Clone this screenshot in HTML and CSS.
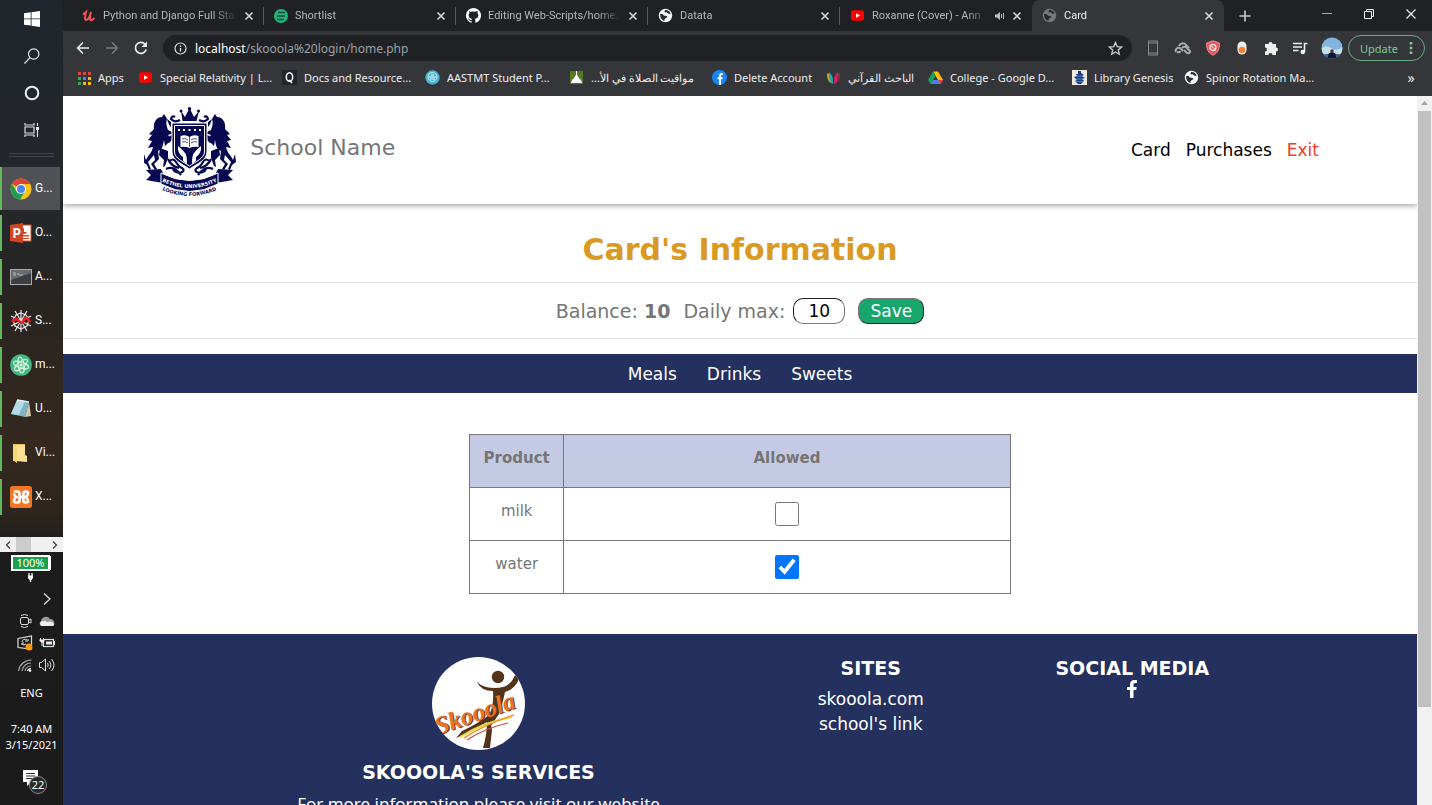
FILE: index.html
```html
<!DOCTYPE html>
<html lang="en">
<head>
<meta charset="utf-8">
<title>Card</title>
<link rel="stylesheet" href="styles.css">
</head>
<body>
<svg class="defs" aria-hidden="true">
  <symbol id="globe" viewBox="0 0 16 16"><circle cx="8" cy="8" r="7.200" fill="currentColor"/><path d="M2.200 6.500c2-.5 3 .2 3.800 1.200s3 .2 3.800 1.300c.6 1.200-1.800 1.600-2.600 2.600-.6.800.2 1.400-.6 2.200C4 13 2 10.500 2.200 6.500zM7.500 2.200c2.500-.5 5 1.300 6 3.600-1.500.8-2.500.2-3.200-.6-1-.8-2.600 0-3.300-1 0-.8.600-1 .5-2z" fill="#292a2d"/></symbol>
  <symbol id="youtube" viewBox="0 0 16 16"><rect x="1" y="2.500" width="14" height="11" rx="2.500" fill="#f00"/><path d="M6.400 5.500v5L10.800 8z" fill="#fff"/></symbol>
  <symbol id="close" viewBox="0 0 10 10"><path d="m1.500 1.500 7 7m0-7-7 7" stroke="currentColor" stroke-width="1.500"/></symbol>
</svg>
<div class="desktop">
  <aside class="taskbar" aria-label="Taskbar">
    <div class="system-buttons">
      <button aria-label="Start"><svg width="16" height="16" viewBox="0 0 16 16"><path fill="#fff" d="M0 2.200 6.700 1.300v6.200H0zM7.500 1.200 16 0v7.500H7.500zM0 8.300h6.700v6.300L0 13.700zM7.500 8.300H16V16l-8.500-1.200z"/></svg></button>
      <button aria-label="Search"><svg width="16" height="16" viewBox="0 0 16 16"><g fill="none" stroke="#e8e8e8" stroke-width="1.200"><circle cx="9.700" cy="6" r="5.200"/><path d="M6 9.700.5 15.500"/></g></svg></button>
      <button aria-label="Cortana"><svg width="16" height="16" viewBox="0 0 16 16"><circle cx="8" cy="8" r="6.300" fill="none" stroke="#eee" stroke-width="2"/></svg></button>
      <button aria-label="Task view"><svg width="16" height="16" viewBox="0 0 16 16"><path d="M1 1v2h9V1M1 15v-2h9v2M1 5h9v6H1zM13.500 1v3m0 4v7" fill="none" stroke="#ddd" stroke-width="1.200"/><rect x="12" y="5" width="3" height="3" fill="#eee"/></svg></button>
    </div>
    <div class="divider"></div>
    <div class="running">
      <button class="app current"><svg width="22" height="22" viewBox="0 0 22 22"><circle cx="11" cy="11" r="10.500" fill="#fbc116"/><path d="M11 11 1.900 5.700A10.500 10.500 0 0 1 20.100 5.700L20.200 6H11z" fill="#dc4437"/><path d="M1.900 5.700A10.500 10.500 0 0 0 10 21.500l5-8L11 11 6.500 13.500z" fill="#1f9d58"/><circle cx="11" cy="11" r="5" fill="#fff"/><circle cx="11" cy="11" r="4" fill="#4a85ee"/></svg><span>G...</span></button>
      <button class="app"><svg width="22" height="22" viewBox="0 0 22 22"><rect x="10" y="3" width="11" height="16" fill="#fff" stroke="#d24625"/><path d="M14 6a3 3 0 1 0 3 4h-3zM12 13h7v1.500h-7zm0 3h7v1h-7z" fill="#d24625"/><path d="M0 3 13 1v20L0 19z" fill="#d24625"/><path d="M4.500 16V7H7a2.500 2.500 0 0 1 0 5H5" fill="none" stroke="#fff" stroke-width="2"/></svg><span>O...</span></button>
      <button class="app"><svg width="22" height="22" viewBox="0 0 22 22"><rect x=".5" y="3.500" width="21" height="15" fill="#3c3f41" stroke="#a8abad"/><path d="M1 4h20v3L1 14z" fill="#686c70"/><path d="M3 7h3M3 9h3m2-2v2m1 0h4" stroke="#bbb"/></svg><span>A...</span></button>
      <button class="app"><svg width="22" height="22" viewBox="0 0 22 22"><g fill="none" stroke="#e8e8e8" stroke-width="1.200"><path d="M11 0v22M1 6l20 10M1 16 21 6M5 1l12 20M17 1 5 21"/><path d="m11 3 5 2 3 5-2 6-6 3-6-3-2-6 3-5z"/></g><path d="M2 12q4-5 7-1t5-1 6 2" fill="none" stroke="#ed1c24" stroke-width="2.800"/></svg><span>S...</span></button>
      <button class="app"><svg width="22" height="22" viewBox="0 0 22 22"><circle cx="11" cy="11" r="10.800" fill="#42b983"/><g fill="none" stroke="#d3f4df" stroke-width="1.200"><ellipse cx="11" cy="11" rx="8" ry="3" transform="rotate(20 11 11)"/><ellipse cx="11" cy="11" rx="8" ry="3" transform="rotate(80 11 11)"/><ellipse cx="11" cy="11" rx="8" ry="3" transform="rotate(140 11 11)"/></g><circle cx="11" cy="11" r="1.500" fill="#fff"/></svg><span>m...</span></button>
      <button class="app"><svg width="22" height="22" viewBox="0 0 22 22"><path d="M7 2 19 4 15 19 1 16z" fill="#79b6c8"/><path d="M7 2 15 3 9 17 1 16z" fill="#b4dce5"/><path d="m19 4 2 14-6 1z" fill="#d0c8a8"/><path d="M7 2 19 4" stroke="#eee" stroke-width="1.500"/></svg><span>U...</span></button>
      <button class="app"><svg width="22" height="22" viewBox="0 0 22 22"><path d="M3 2h12v17H3z" fill="#e9bf56"/><path d="M6 3h9v10l2 1v6L6 19z" fill="#fce094"/><path d="m3 2 4 3v16l-4-3z" fill="#f7d774"/></svg><span>Vi...</span></button>
      <button class="app"><svg width="22" height="22" viewBox="0 0 22 22"><rect width="22" height="22" rx="2.500" fill="#f37623"/><path d="M4 5.500h3.500q2 0 2 2V9q0 2 2 2t2-2V7.500q0-2 2-2H16q2 0 2 2t-2.500 3.500Q18 12.500 18 14.500t-2 2h-.5q-2 0-2-2V13q0-2-2-2t-2 2v1.500q0 2-2 2H6q-2 0-2-2T6.500 11Q4 9.500 4 7.500" fill="none" stroke="#fff" stroke-width="2.600"/></svg><span>X...</span></button>
    </div>
    <div class="mini-scroll"><svg width="6" height="8" viewBox="0 0 6 8"><path d="M5 .5 1.500 4 5 7.500" fill="none" stroke="#444" stroke-width="1.300"/></svg><i></i><svg width="6" height="8" viewBox="0 0 6 8"><path d="M1 .5 4.500 4 1 7.500" fill="none" stroke="#444" stroke-width="1.300"/></svg></div>
    <div class="battery">100%</div>
    <svg class="plug" width="7" height="9" viewBox="0 0 7 9"><path d="M2 0v3m3-3v3M3.500 6v3" stroke="#fff" stroke-width="1.300"/><path d="M1 2.500h5V5L4.500 7h-2L1 5z" fill="#fff"/></svg>
    <button class="more" aria-label="Show hidden icons"><svg width="8" height="12" viewBox="0 0 8 12"><path d="M1 .5 7 6l-6 5.500" fill="none" stroke="#ddd" stroke-width="1.200"/></svg></button>
    <div class="tray">
      <svg width="16" height="16" viewBox="0 0 16 16"><g fill="none" stroke="#ddd"><rect x="3.500" y="4.500" width="8" height="7" rx="1.500"/><path d="m12 7 2-1v4l-2-1M4 2.500q3.500-2 7 0M4 13.500q3.500 2 7 0"/></g></svg>
      <svg width="16" height="16" viewBox="0 0 16 16"><path d="M2 13a3 3 0 0 1 0-5 5 5 0 0 1 9-2 4 4 0 0 1 3 7z" fill="#999"/><path d="M1 10q3-4 7-1 6-2 7 3l-1 1H2z" fill="#eee"/></svg>
      <svg width="16" height="16" viewBox="0 0 16 16"><path d="M1 3.500 14.500 1v13L1 12.500z" fill="none" stroke="#ddd" stroke-width="1.200"/><path d="M10 5a3 3 0 0 0-5 2m6-3v2H8m-3 4V8h2m-2 1q2 2 4 0" fill="none" stroke="#ddd"/><circle cx="12" cy="12" r="3.400" fill="#ff9a0c"/></svg>
      <svg width="16" height="16" viewBox="0 0 16 16"><rect x="4.500" y="4.500" width="10" height="7" fill="none" stroke="#ddd" stroke-width="1.200"/><path d="M7 6.500h6v3H7zM15 6h1v4h-1z" fill="#eee"/><path d="M1.500 3v2m3-2v2M3 7v4" stroke="#eee"/><path d="M.5 4.500h5V6L3 8 .5 6z" fill="#eee"/></svg>
      <svg width="16" height="16" viewBox="0 0 16 16"><g fill="none" stroke="#aaa" stroke-width="1.200"><path d="M1.500 14A13 13 0 0 1 14.500 3M5 14a9 9 0 0 1 9-8M8 14a6 6 0 0 1 6-5"/><path d="M10.500 14a3.500 3.500 0 0 1 3.500-2.500" stroke="#fff"/></g><circle cx="13" cy="13.500" r="1.300" fill="#fff"/></svg>
      <svg width="16" height="16" viewBox="0 0 16 16"><g fill="none" stroke="#ddd"><path d="M.5 5.500h2L6.500 2v12L2.500 10.500h-2zM8.500 6q1.500 2 0 4M10.500 4q3 4 0 8M12.500 2q5 6 0 12"/></g></svg>
    </div>
    <div class="lang">ENG</div>
    <div class="clock">7:40 AM<br>3/15/2021</div>
    <button class="notices" aria-label="Notifications"><svg width="18" height="16" viewBox="0 0 18 16"><path d="M0 0h15v12H8l-4 4v-4H0z" fill="#fff"/><path d="M3 3.500h9M3 6h9M3 8.500h9" stroke="#333"/></svg><b>22</b></button>
  </aside>

  <div class="browser">
    <div class="tabs">
      <div class="tab"><svg width="14" height="14" viewBox="0 0 14 14"><path d="M1 5.500 4 3q-2 8 0 8c2.500 0 4-4 5-8-2 7-1 9 1 8l2.500-2" fill="none" stroke="#ec5252" stroke-width="2"/></svg><span class="tab-title">Python and Django Full Sta</span><button aria-label="Close tab"><svg width="10" height="10"><use href="#close"/></svg></button></div>
      <div class="tab"><svg width="14" height="14" viewBox="0 0 14 14"><circle cx="7" cy="7" r="7" fill="#1fb57a"/><path d="M4 3.500h7M3 7h8M3 10.500h7" stroke="#174836" stroke-width="1.500"/></svg><span class="tab-title">Shortlist</span><button aria-label="Close tab"><svg width="10" height="10"><use href="#close"/></svg></button></div>
      <div class="tab"><svg width="15" height="15" viewBox="0 0 16 16"><path fill="#fff" d="M8 0a8 8 0 0 0-2.500 15.600c.4.100.5-.2.500-.4v-1.400c-2.200.5-2.700-1-2.700-1-.4-.9-.9-1.200-.9-1.200-.7-.5.100-.5.100-.5.800.1 1.200.8 1.200.8.700 1.300 1.900.9 2.300.7.100-.5.300-.9.500-1.100-1.800-.2-3.600-.9-3.600-4 0-.9.300-1.600.8-2.100-.1-.2-.4-1 .1-2.100 0 0 .7-.2 2.200.8a7.500 7.500 0 0 1 4 0c1.500-1 2.200-.8 2.200-.8.400 1.100.2 1.900.1 2.100.5.600.8 1.300.8 2.100 0 3.100-1.900 3.800-3.700 4 .3.300.6.800.6 1.500v2.200c0 .2.100.5.500.4A8 8 0 0 0 8 0z"/></svg><span class="tab-title">Editing Web-Scripts/home.</span><button aria-label="Close tab"><svg width="10" height="10"><use href="#close"/></svg></button></div>
      <div class="tab"><svg class="light" width="15" height="15"><use href="#globe"/></svg><span class="tab-title">Datata</span><button aria-label="Close tab"><svg width="10" height="10"><use href="#close"/></svg></button></div>
      <div class="tab"><svg width="15" height="15"><use href="#youtube"/></svg><span class="tab-title">Roxanne (Cover) - Ann</span><svg class="sound" width="10" height="10" viewBox="0 0 10 10"><path d="M0 3.500h2L5 1v8L2 6.500H0z" fill="#bbb"/><path d="M6.500 3v4M8.500 2v6" stroke="#bbb"/></svg><button aria-label="Close tab"><svg width="10" height="10"><use href="#close"/></svg></button></div>
      <div class="tab active"><svg class="dim" width="15" height="15"><use href="#globe"/></svg><span class="tab-title">Card</span><button aria-label="Close tab"><svg width="10" height="10"><use href="#close"/></svg></button></div>
      <button class="new-tab" aria-label="New tab"><svg width="12" height="12" viewBox="0 0 12 12"><path d="M6 .5v11M.5 6h11" stroke="#ccc" stroke-width="1.600"/></svg></button>
      <div class="window-buttons">
        <button aria-label="Minimize"><svg width="10" height="10" viewBox="0 0 10 10"><path d="M0 4.500h10" stroke="#aaa"/></svg></button>
        <button aria-label="Restore"><svg width="10" height="10" viewBox="0 0 10 10"><path d="M.5 2.500h7v7h-7zM2.500 2V.5h7v7H8" fill="none" stroke="#eee"/></svg></button>
        <button aria-label="Close"><svg width="10" height="10" viewBox="0 0 10 10"><path d="m.5.5 9 9m0-9-9 9" stroke="#eee" stroke-width="1.200"/></svg></button>
      </div>
    </div>
    <div class="toolbar">
      <button aria-label="Back"><svg width="14" height="14" viewBox="0 0 14 14"><path d="M13 7H2m5-5.500L1.500 7 7 12.500" fill="none" stroke="#eee" stroke-width="1.500"/></svg></button>
      <button aria-label="Forward"><svg width="14" height="14" viewBox="0 0 14 14"><path d="M1 7h11M7 1.500 12.500 7 7 12.500" fill="none" stroke="#77797c" stroke-width="1.500"/></svg></button>
      <button aria-label="Reload"><svg width="14" height="14" viewBox="0 0 14 14"><path d="M12.200 8.500A5.500 5.500 0 1 1 11 3.200" fill="none" stroke="#eee" stroke-width="1.700"/><path d="M13 .5V6H7.500z" fill="#eee"/></svg></button>
      <div class="omnibox">
        <svg width="13" height="13" viewBox="0 0 13 13"><circle cx="6.500" cy="6.500" r="5.500" fill="none" stroke="#ddd" stroke-width="1.200"/><path d="M6.500 6v3.500m0-6V5" stroke="#ddd" stroke-width="1.400"/></svg>
        <a href="#"><b>localhost</b>/skooola%20login/home.php</a>
        <button aria-label="Bookmark this page"><svg width="15" height="15" viewBox="0 0 15 15"><path d="m7.500 1.500 1.700 4.100 4.400.4-3.300 2.900 1 4.300-3.800-2.300-3.800 2.300 1-4.300L1.400 6l4.400-.4z" fill="none" stroke="#ccc" stroke-width="1.300"/></svg></button>
      </div>
      <div class="extensions">
        <svg width="16" height="16" viewBox="0 0 16 16"><rect x="3.500" y="1" width="9" height="14" fill="none" stroke="#8a8b8d"/><path d="M3.500 3h9m-9 10h9" stroke="#8a8b8d"/></svg>
        <svg width="18" height="16" viewBox="0 0 18 16"><g fill="none" stroke="#aaa" stroke-width="2"><path d="M5 6a4 4 0 0 1 7-1l3 3M2 12a3 3 0 0 1 4-4l3 3M8 8a3 3 0 0 1 5 0l3 3a2 2 0 0 1-3 2l-3-3M3 12q3 1 3-1"/></g></svg>
        <svg width="16" height="16" viewBox="0 0 16 16"><path d="M8 .8 14.500 3c0 6-1.500 10-6.500 12.300C3 13 1.500 9 1.500 3z" fill="#e9595f" stroke="#f0868a"/><circle cx="8" cy="7.500" r="3" fill="none" stroke="#fff" stroke-width="1.200"/><path d="m6 5.500 4 4" stroke="#fff"/></svg>
        <svg width="16" height="16" viewBox="0 0 16 16"><rect x="3.500" y="1.500" width="9" height="13" rx="4.500" fill="#eee"/><circle cx="8" cy="10" r="3.300" fill="#f58232"/></svg>
        <svg width="16" height="16" viewBox="0 0 16 16"><path d="M2 4h3.500a2 2 0 1 1 4 0H13v3.500a2 2 0 1 1 0 4V15H9.500a2 2 0 1 0-4 0H2v-3.500a2 2 0 1 0 0-4z" fill="#eee"/></svg>
        <svg width="16" height="16" viewBox="0 0 16 16"><path d="M1 3.500h9M1 7h9M1 10.500h5.500M12.500 12V3.500H15.500" fill="none" stroke="#eee" stroke-width="1.600"/><circle cx="10.800" cy="12" r="2.300" fill="#eee"/></svg>
        <svg width="22" height="22" viewBox="0 0 22 22"><clipPath id="face"><circle cx="11" cy="11" r="10.500"/></clipPath><g clip-path="url(#face)"><path d="M0 0h22v22H0z" fill="#82b4de"/><path d="M0 12q5-5 10-1t12-1v7H0z" fill="#c9deed"/><path d="M0 18q11-3 22 0v4H0z" fill="#3b648b"/><path d="m6 22 2-6 3-1 3 1 2 6z" fill="#0d1b33"/><circle cx="11" cy="14" r="1.800" fill="#4c3b3b"/></g></svg>
      </div>
      <button class="update">Update <svg width="4" height="14" viewBox="0 0 4 14"><path d="M.7 1h2.600v2.600H.7zm0 4.700h2.600v2.600H.7zm0 4.700h2.600V13H.7z" fill="#81c995"/></svg></button>
    </div>
    <nav class="bookmarks" aria-label="Bookmarks">
      <a href="#"><svg width="14" height="14" viewBox="0 0 14 14"><path d="M1 1h3v3H1zm5 0h3v3H6zm5 0h3v3h-3z" fill="#ea4335"/><path d="M1 6h3v3H1zm0 5h3v3H1z" fill="#34a853"/><path d="M6 6h3v3H6z" fill="#4285f4"/><path d="M11 6h3v3h-3zM6 11h3v3H6zm5 0h3v3h-3z" fill="#fbbc05"/></svg>Apps</a>
      <a href="#"><svg width="15" height="15"><use href="#youtube"/></svg>Special Relativity | L...</a>
      <a href="#"><svg width="15" height="15" viewBox="0 0 15 15"><path d="M0 0h15v15H0z" fill="#20262b"/><ellipse cx="7.500" cy="7" rx="3.200" ry="4.300" fill="none" stroke="#fff" stroke-width="1.500"/><path d="m7 10 3 3" stroke="#fff" stroke-width="1.500"/></svg>Docs and Resource...</a>
      <a href="#"><svg width="15" height="15" viewBox="0 0 15 15"><circle cx="7.500" cy="7.500" r="7.200" fill="#49b2d3"/><circle cx="7.500" cy="7" r="4.500" fill="none" stroke="#c9edf7"/><path d="M4 7h7M5 9h5m-4-4h3" stroke="#e5f8fc"/></svg>AASTMT Student P...</a>
      <a href="#"><svg width="15" height="15" viewBox="0 0 15 15"><path d="M1 1h13v13H1z" fill="#547a21"/><path d="M2 13q0-3 3-5l2.500-4L10 8q3 2 3 5zM7 1h1v4H7z" fill="#fff"/></svg><bdi lang="ar" dir="rtl">مواقيت الصلاة في الأ...</bdi></a>
      <a href="#"><svg width="15" height="15" viewBox="0 0 15 15"><circle cx="7.500" cy="7.500" r="7.500" fill="#1787f5"/><path d="M10.700 4H9.500Q8 4 8 5.500V15M5.500 8.200h5" fill="none" stroke="#fff" stroke-width="2"/></svg>Delete Account</a>
      <a href="#"><svg width="15" height="15" viewBox="0 0 15 15"><path d="M1 3q4 1 4 10-4-2-4-10z" fill="#e0a52b"/><path d="M3 2q4.500 3 4 12-5-2-4-12z" fill="#1ba6b6"/><path d="M12 2q-4.500 3-4 12 5-2 4-12z" fill="#dc2358"/><path d="M14 3q-3 1-3.500 10 4-2 3.500-10z" fill="#8a2a47"/></svg><bdi lang="ar" dir="rtl">الباحث القرآني</bdi></a>
      <a href="#"><svg width="15" height="15" viewBox="0 0 15 15"><path d="M5 1.500h5l5 8.500h-5z" fill="#fbbc05"/><path d="M5 1.500 7.500 6 2.500 14 0 10z" fill="#18a05e"/><path d="M5 10h10l-2.500 4h-10z" fill="#4285f4"/><path d="M10 10h5l-2.500 4z" fill="#e94235"/></svg>College - Google D...</a>
      <a href="#"><svg width="15" height="15" viewBox="0 0 15 15"><path d="M0 0h15v15H0z" fill="#eeeade"/><path d="M6 1h3v2l3 2-2 1 3 2-3 1 2 2-3 3H6l-3-3 2-1-3-3 3-1-1-2h2z" fill="#173f88"/><path d="M4 6h7M3 9h9M4 11.500h7" stroke="#8aa3c9" stroke-width=".6"/></svg>Library Genesis</a>
      <a href="#"><svg class="light" width="15" height="15"><use href="#globe"/></svg>Spinor Rotation Ma...</a>
      <button class="overflow" aria-label="More bookmarks">»</button>
    </nav>

    <div class="viewport">
      <div class="page">
        <header class="site-header">
          <a class="brand" href="#">
            <svg class="crest" width="92" height="90" viewBox="0 0 92 90" role="img" aria-label="Bethel University crest">
              <g fill="#07084f">
                <path d="M37 4 41 10 45.500 1 50 10l5-6-2.500 10h-14z"/><circle cx="37" cy="4" r="1.500"/><circle cx="45.500" cy="1.800" r="1.700"/><circle cx="54.500" cy="4" r="1.500"/>
                <g id="horse">
                  <path d="M27 20C24 18 24 12 20 7l-2 3C12 10 9 16 10 22l-5 5 3 1-4 5 4 1-4 7 5-1c-1 6-5 8-7 13l-2-6-1 8 4 3 2 5 2-1-3-7 6-7 1 5-4 4 4 6 2-1-3-5 5-5-1-8c5-2 5-6 6-11l5 3 3-3-4-5 6-2-6-3c-2-5-2-8-1-11l4 3z"/>
                  <path d="m16 41 8 3v7l-3 8-2 1 1-7-5-5zM20 33l9-6 1 3-9 9z"/>
                </g>
                <use href="#horse" transform="matrix(-1 0 0 1 91 0)"/>
              </g>
              <path d="M28 16h35v29c0 8-10 12-17.500 17C38 57 28 53 28 45z" fill="#07084f" stroke="#fff" stroke-width="1"/>
              <g fill="#07084f">
                <path d="m2 63 15-1 2 4v10L2 73l5-5zM89 63l-15-1-2 4v10l17-3-5-5z"/>
                <path d="M17 66q28.500 15 57 0v11q-28.500 15-57 0z" stroke="#fff" stroke-width="1"/>
              </g>
              <g fill="none" stroke="#07084f" stroke-width="2.200">
                <path d="M36 13q-5 3-9-1 1-4 4-2M55 13q5 3 9-1-1-4-4-2M25 55q4-5 7 0t6 6q4 3-2 5-8-1-6-5M66 55q-4-5-7 0t-6 6q-4 3 2 5 8-1 6-5M22 62q8-4 15 6M69 62q-8-4-15 6M24 52q3 7 11 9M67 52q-3 7-11 9"/>
              </g>
              <path d="M30.500 18.500h30V45c0 6-9 10-15 14-6-4-15-8-15-14z" fill="none" stroke="#fff" stroke-width="1"/>
              <g fill="#fff">
                <path d="M34 22h2v2h-2zm5 0h2v2h-2zm5.500 0h2v2h-2zm5.500 0h2v2h-2zm5 0h2v2h-2z"/>
                <path d="M36.500 29q5-2 9 1 4-3 9-1v11q-5-1-9 1-4-2-9-1z"/>
                <path d="M34 39q5 4 7 7 2 2 2 11l-4-3v-4q-6-4-5-11zM57 39q-5 4-7 7-2 2-2 11l4-3v-4q6-4 5-11z"/>
              </g>
              <path d="M45.500 30v10M38 32q4-1 6 1m-6 2q4-1 6 1m9-4q-4-1-6 1m6 2q-4-1-6 1" fill="none" stroke="#07084f" stroke-width=".7"/>
              <path id="motto-a" d="M16 73.500q29.500 15 59 0" fill="none"/><path id="motto-b" d="M12 80q33.500 18 67 0" fill="none"/>
              <text class="ribbon"><textPath href="#motto-a" startOffset="50%" text-anchor="middle">BETHEL UNIVERSITY</textPath></text>
              <text class="motto"><textPath href="#motto-b" startOffset="50%" text-anchor="middle">LOOKING FORWARD</textPath></text>
            </svg>
            <span>School Name</span>
          </a>
          <nav class="main-nav" aria-label="Main"><a href="#">Card</a><a href="#">Purchases</a><a class="exit" href="#">Exit</a></nav>
        </header>
        <main>
          <h1>Card's Information</h1>
          <form class="limits">
            <span>Balance: <b>10</b></span>
            <label for="daily">Daily max:</label>
            <input id="daily" type="text" inputmode="numeric" value="10">
            <button type="button">Save</button>
          </form>
          <nav class="categories" aria-label="Product categories"><a href="#">Meals</a><a href="#">Drinks</a><a href="#">Sweets</a></nav>
          <table class="products">
            <thead><tr><th class="name" scope="col">Product</th><th scope="col">Allowed</th></tr></thead>
            <tbody>
              <tr><td><label for="milk">milk</label></td><td><input id="milk" type="checkbox"></td></tr>
              <tr><td><label for="water">water</label></td><td><input id="water" type="checkbox" checked></td></tr>
            </tbody>
          </table>
        </main>
        <footer class="site-footer">
          <div class="footer-grid">
            <section>
              <svg class="badge" width="93" height="93" viewBox="0 0 93 93" role="img" aria-label="Skooola">
                <clipPath id="round"><circle cx="46.500" cy="46.500" r="46.500"/></clipPath>
                <g clip-path="url(#round)">
                  <path d="M0 0h93v93H0z" fill="#fff"/>
                  <circle cx="66" cy="20" r="6.200" fill="#53341a"/>
                  <path d="M45 25q4 4 9 5 9 2 17 0 8-2 12-12l4 4q-4 10-14 13-3 14-6 22-5 7-8 12l1 4-2 18h-7q4-14 4-26-14 9-31 16l6-7q17-8 27-16 5-8 4-24-12 0-16-9z" fill="#53341a"/>
                  <path d="M28 80q24-15 52-20" fill="none" stroke="#ecd447" stroke-width="2"/><path d="M35 83q18-12 41-17" fill="none" stroke="#c9483b" stroke-width="1.200"/><path d="M32 81q22-14 50-23" fill="none" stroke="#ef9836" stroke-width="1.500"/>
                  <g transform="rotate(-19 8 77)"><text class="script shade" x="7" y="78">Skooola</text><text class="script" x="6" y="77">Skooola</text></g>
                </g>
              </svg>
              <h2>SKOOOLA'S SERVICES</h2>
              <p>For more information please visit our website</p>
            </section>
            <section><h2>SITES</h2><ul><li><a href="#">skooola.com</a></li><li><a href="#">school's link</a></li></ul></section>
            <section><h2>SOCIAL MEDIA</h2><a class="facebook" href="#" aria-label="Facebook"><svg width="10" height="18" viewBox="0 0 10 18"><path d="M3 18v-8H0V7h3V4.500C3 1.500 4.700 0 7.300 0 8.600 0 10 .2 10 .2V3H8.400C7 3 6.500 3.800 6.500 4.800V7h3.200l-.5 3H6.500v8z" fill="#fff"/></svg></a></section>
          </div>
        </footer>
      </div>
      <div class="scrollbar"><svg width="15" height="15" viewBox="0 0 15 15"><path d="m4 9 3.500-4L11 9z" fill="#a3a3a3"/></svg><i></i><svg width="15" height="15" viewBox="0 0 15 15"><path d="m4 6 3.500 4L11 6z" fill="#505050"/></svg></div>
    </div>
  </div>
</div>
</body>
</html>
```

FILE: styles.css
```css
* { box-sizing: border-box; }
body { margin: 0; font-family: "Noto Sans", "Open Sans", sans-serif; }
button { padding: 0; border: 0; background: none; color: inherit; font: inherit; }
a { color: inherit; text-decoration: none; }
svg { flex: none; display: block; }
.defs { position: absolute; width: 0; height: 0; }

.desktop { display: grid; grid-template-columns: 63px minmax(0, 1fr); height: 100vh; overflow: hidden; }

/* Taskbar */
.taskbar { display: flex; flex-direction: column; background: linear-gradient(#20262b, #24272b 25%, #292420 37%, #35291f 53%, #2d251e 61%, #1c1c1c 66%, #1b1b1b); color: #fff; font-size: 11px; overflow: hidden; border-bottom: 2px solid #444; }
.system-buttons { display: grid; grid-auto-rows: 37px; }
.system-buttons button { display: grid; place-items: center; }
.divider { height: 4px; margin: 5px 9px 10px; border: solid #414549; border-width: 1px 0; }
.running { display: grid; grid-auto-rows: 43px; row-gap: 1px; width: 60px; }
.app { display: flex; align-items: center; gap: 3px; padding-left: 10px; background: linear-gradient(#61b95b, #61b95b) left center / 2px 36px no-repeat; font-family: Roboto, sans-serif; font-size: 12px; line-height: 15px; text-align: left; }
.current { background-color: #505154; background-size: 2px 43px; }
.mini-scroll { display: flex; align-items: center; justify-content: space-between; height: 15px; margin-top: 19px; padding: 0 5px; background: #f0f0f0; }
.mini-scroll i { width: 15px; height: 15px; margin-right: 16px; background: #cdcdcd; }
.battery { width: 39px; height: 16px; margin: 3px 0 0 11px; border: 2px solid #fff; background: #16a34c; text-align: center; line-height: 12px; box-shadow: 2px 0 0 -1px #fff; }
.plug { margin: 2px 0 0 27px; }
.more { display: grid; margin: 11px 0 8px 43px; }
.tray { display: grid; grid-template-columns: 16px 16px; gap: 6px; padding-left: 17px; }
.lang { margin-top: 12px; text-align: center; line-height: 15px; }
.clock { margin-top: 21px; text-align: center; line-height: 16px; }
.notices { position: relative; width: 18px; margin: 17px 0 0 23px; }
.notices b { position: absolute; left: 6px; top: 6px; width: 18px; height: 18px; border: 1px solid #888; border-radius: 50%; background: #292929; font-weight: 400; line-height: 16px; }

/* Browser frame */
.browser { display: flex; flex-direction: column; min-width: 0; background: #35363a; color: #eee; font-size: 11px; }
.tabs { display: flex; height: 31px; padding-left: 9px; background: #202124; color: #b4b7bb; }
.tab { display: flex; align-items: center; gap: 7px; flex: 0 1 192px; min-width: 0; padding: 0 10px; background: linear-gradient(#55575b, #55575b) right center / 1px 18px no-repeat; font-family: Roboto, sans-serif; }
.tab:nth-child(5) { background: none; }
.tab.active { border-radius: 8px 8px 0 0; background: #35363a; color: #eee; }
.tab-title { flex: 1; overflow: hidden; white-space: nowrap; -webkit-mask-image: linear-gradient(90deg, #000 82%, transparent); mask-image: linear-gradient(90deg, #000 82%, transparent); }
.tab button { color: #ddd; }
.light { color: #f4f4f4; }
.dim { color: #74777b; }
.new-tab { display: grid; place-items: center; width: 42px; }
.window-buttons { display: grid; grid-template-columns: repeat(3, 42px); height: 28px; margin-left: auto; }
.window-buttons button { display: grid; place-items: center; }
.toolbar { display: flex; align-items: center; height: 34px; padding: 0 7px 0 13px; }
.toolbar > button:not(.update) { width: 29px; }
.omnibox { display: flex; flex: 1; align-items: center; gap: 8px; height: 26px; padding: 0 9px 0 11px; border-radius: 13px; background: #202124; color: #9aa0a6; font-size: 12px; }
.omnibox a { flex: 1; }
.omnibox b { color: #fff; font-weight: 400; }
.extensions { display: flex; align-items: center; gap: 13px; padding: 0 5px 0 13px; }
.update { display: flex; align-items: center; justify-content: space-between; width: 77px; height: 26px; padding: 0 11px; border: 1px solid #68a97b; border-radius: 13px; color: #81c995; }
.bookmarks { display: grid; grid-template-columns: 61px 144px 143px 144px 143px 114px 102px 144px 112px 1fr 10px; align-items: center; height: 31px; padding: 0 16px 6px 14px; white-space: nowrap; }
.bookmarks a { display: flex; align-items: center; gap: 7px; }
.overflow { font-size: 14px; }

/* Page */
.viewport { display: flex; flex: 1; min-height: 0; }
.page { flex: 1; overflow: hidden; background: #fff; color: #757575; font-family: "DejaVu Sans", Verdana, sans-serif; font-size: 17px; }
.scrollbar { display: flex; flex-direction: column; width: 15px; background: #f1f1f1; }
.scrollbar i { flex: 0 1 596px; margin: 0 1px; background: #c1c1c1; }
.scrollbar svg:last-child { margin-top: auto; }
.site-header { display: flex; align-items: center; justify-content: space-between; height: 108px; padding: 0 98px 0 6%; box-shadow: 0 2px 5px #aaa; }
.brand { display: flex; align-items: center; gap: 14px; font-size: 22px; line-height: 28px; }
.brand span { padding-bottom: 4px; }
.crest { margin-top: 3px; }
.ribbon { fill: #fff; font: bold 5px "DejaVu Sans", sans-serif; }
.motto { fill: #07084f; font: bold 5px "DejaVu Sans", sans-serif; }
.main-nav { display: flex; gap: 15px; color: #000; }
.exit { color: #f43b26; }
h1 { margin: 0; padding: 28px 0 14px; border-bottom: 1px solid #e8e8e8; color: #d99a24; font-size: 30px; line-height: 36px; text-align: center; }
.limits { display: flex; align-items: center; justify-content: center; height: 56px; border-bottom: 1px solid #e8e8e8; font-size: 19px; }
.limits label { margin: 0 8px 0 13px; }
.limits input { width: 52px; height: 26px; border: 1px solid; border-color: #222 #777 #777 #222; border-radius: 10px; background: #fff; color: #000; font: 17px "DejaVu Sans", sans-serif; text-align: center; }
.limits button { width: 66px; height: 26px; margin-left: 13px; border: 1px solid; border-color: #777 #222 #222 #777; border-radius: 10px; background: #18a66d; color: #fff; font-size: 17px; line-height: 24px; }
.categories { display: flex; align-items: center; justify-content: center; gap: 30px; height: 39px; margin-top: 15px; background: #24305e; color: #fff; }
.products { width: 40%; margin: 41px auto 40px; border-collapse: collapse; font-size: 15px; text-align: center; }
.products th, .products td { height: 53px; padding: 14px 12px 0; border: 1px solid #777; line-height: 18px; vertical-align: top; }
.products th { background: #c5cae4; }
.products .name { width: 94px; }
.products input { display: block; width: 24px; height: 24px; margin: 0 auto; }
.site-footer { padding-top: 23px; background: #24305e; color: #fff; }
.footer-grid { display: grid; grid-template-columns: 2fr 1fr 1fr; max-width: 1046px; margin: 0 auto; text-align: center; }
.badge { margin: 0 auto 11px; }
h2 { margin: 0; font-size: 19px; line-height: 22px; }
.site-footer p { margin: 9px 0 24px; font: 17px/24px "Noto Sans", sans-serif; }
.site-footer ul { margin: 8px 0 0; padding: 0; list-style: none; line-height: 25px; }
.facebook { display: grid; justify-content: center; margin-top: 1px; }
.script { fill: #e87527; font: italic bold 25px "Liberation Serif", serif; }
.shade { fill: #683f22; }
```
